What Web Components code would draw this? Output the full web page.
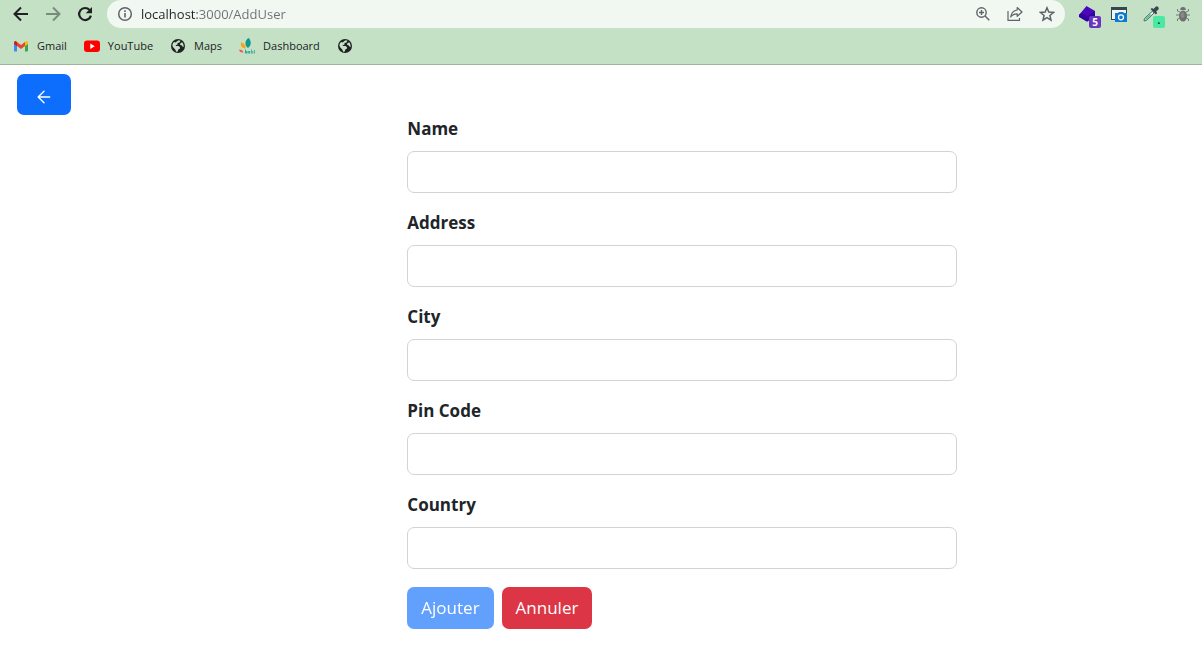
<!DOCTYPE html>
<html lang="fr">
<head>
<meta charset="utf-8">
<meta name="viewport" content="width=device-width, initial-scale=1">
<title>AddUser</title>
<style>
body { margin: 0; background: #fff; color: #212529; font-family: "Open Sans", "Noto Sans", sans-serif; }
</style>
</head>
<body>
<browser-chrome>
  <nav-button slot="nav" icon="back" label="Back"></nav-button>
  <nav-button slot="nav" icon="forward" label="Forward"></nav-button>
  <nav-button slot="nav" icon="reload" label="Reload"></nav-button>
  <address-bar slot="address" url="localhost:3000/AddUser">
    <nav-button icon="zoom" label="Zoom"></nav-button>
    <nav-button icon="share" label="Share"></nav-button>
    <nav-button icon="star" label="Bookmark"></nav-button>
  </address-bar>
  <nav-button slot="extensions" icon="layers" label="Layers" badge="5" tone="violet"></nav-button>
  <nav-button slot="extensions" icon="capture" label="Capture"></nav-button>
  <nav-button slot="extensions" icon="picker" label="Color picker" badge="." tone="green"></nav-button>
  <nav-button slot="extensions" icon="bug" label="Debugger"></nav-button>
  <bookmark-link slot="bookmarks" icon="gmail" name="Gmail">Gmail</bookmark-link>
  <bookmark-link slot="bookmarks" icon="youtube" name="YouTube">YouTube</bookmark-link>
  <bookmark-link slot="bookmarks" icon="globe" name="Maps">Maps</bookmark-link>
  <bookmark-link slot="bookmarks" icon="bakeli" name="Dashboard">Dashboard</bookmark-link>
  <bookmark-link slot="bookmarks" icon="globe" name="Site"></bookmark-link>
</browser-chrome>
<user-page>
  <action-button slot="back" variant="primary" label="Retour"><app-icon name="arrow"></app-icon></action-button>
  <form-field name="name" label="Name"></form-field>
  <form-field name="address" label="Address"></form-field>
  <form-field name="city" label="City"></form-field>
  <form-field name="pincode" label="Pin Code"></form-field>
  <form-field name="country" label="Country"></form-field>
  <action-button slot="actions" variant="primary" disabled>Ajouter</action-button>
  <action-button slot="actions" variant="danger">Annuler</action-button>
</user-page>

<script>
const stroke = 'fill="none" stroke="currentColor"';
const ICONS = {
  back: `<g ${stroke} stroke-width="2"><path d="M15 8H2M8 1.5 1.5 8 8 14.500"/></g>`,
  forward: `<g ${stroke} stroke-width="2" opacity=".45"><path d="M1 8h13M8 1.500 14.500 8 8 14.500"/></g>`,
  reload: `<g ${stroke} stroke-width="2.200"><path d="M12.600 4A6 6 0 1 0 13.900 9.600"/></g><path fill="currentColor" d="M15 1v6.300H8.700z"/>`,
  info: `<circle cx="8" cy="8" r="6.300" ${stroke} stroke-width="1.500"/><path fill="currentColor" d="M7.200 7h1.600v4.500H7.200zM7.200 4.300h1.600v1.600H7.200z"/>`,
  zoom: `<g ${stroke} stroke-width="1.400"><circle cx="6.500" cy="6.500" r="4.700"/><path d="m10 10 4.300 4.300M4 6.500h5M6.500 4v5"/></g>`,
  share: `<g ${stroke} stroke-width="1.200" stroke-linejoin="round"><path d="M1 5v9.400h11.500V12"/><path d="M10.200 1.500 15 6l-4.800 4.300V7.900C7.500 7.900 5.300 8.800 3.700 11c.6-3.700 2.800-6.400 6.500-7z"/></g>`,
  star: `<path ${stroke} stroke-width="1.500" d="m8 1.800 1.800 4.300 4.700.4-3.600 3 1.100 4.600L8 11.700l-4 2.400 1.100-4.600-3.600-3 4.700-.4z"/>`,
  layers: `<path fill="#30009c" d="M0 9v2l8 4.800 8-4.800V5z"/><path fill="#4a08b8" d="m7.500 0 8.500 5-8 6-8-2z"/><path fill="#3b009f" d="M0 8.500 2.500 7l6 3L16 5v3l-7.500 5z"/>`,
  capture: `<path fill="#34474f" d="M0 1h16v13H0z"/><path fill="#f6f8f8" d="M1 4h14v9H1z"/><path fill="#0c7bd0" d="M4 7h3l1-1h4l1 1h3v9H4z"/><circle cx="10" cy="11.300" r="2.500" fill="#0c7bd0" stroke="#fff" stroke-width="1.300"/>`,
  picker: `<path d="m9.500 5-8 7.500L1 15l2.500-.6L11 7z" fill="#d7f5e5" stroke="#5b6b66"/><path d="m7.500 8.500-5 5" stroke="#35c48b" stroke-width="1.500"/><path fill="#37474f" d="m7.500 3 1.500-1 1.500 1L12.700.7a2 2 0 0 1 2.700 2.800L13.200 5.500l1 1.500-1.400 1.500z"/>`,
  bug: `<g ${stroke} stroke-width=".9"><path d="M5 6 2.500 5V3M11 6l2.500-1V3M4 9H1M12 9h3M5 12l-2.500 1v2M11 12l2.500 1v2"/></g><path fill="currentColor" d="M5.200 4a2.800 3 0 0 1 5.600 0z"/><ellipse cx="8" cy="10" rx="4" ry="5.500" fill="currentColor"/><ellipse cx="7.500" cy="9" rx="2" ry="3" fill="#858987"/>`,
  gmail: `<path fill="#4285f4" d="M1 5v7.500q0 1 1 1h2V7z"/><path fill="#34a853" d="M15 5v7.500q0 1-1 1h-2V7z"/><path fill="#ea4335" d="M4 4v4l4 3 4-3V4L8 7z"/><path fill="#c5221f" d="M1 4.500V6l3 2.200V4C2.500 2 1 3 1 4.500z"/><path fill="#fbbc04" d="M15 4.500V6l-3 2.200V4c1.500-2 3-1 3 .5z"/>`,
  youtube: `<rect y="2.500" width="16" height="11.500" rx="3" fill="#f00"/><path fill="#fff" d="m6.300 5.500 4.500 2.700-4.500 2.700z"/>`,
  globe: `<circle cx="8" cy="8" r="7" fill="#202124"/><path fill="#c5e1c5" d="M8.500 2.300 10.500 2.800 9.500 4.500l-2 .6v1.400l-1.700.7v.8h2.800L10 9.300l-.2 1.500-1.600.8-.4 1.900-1.700.2-.8-2.200-2-2L2.300 7.500A5.800 5.800 0 0 1 4 4l1.500.4zM12.200 4.200A6 6 0 0 1 13.800 9l-1.300-.4-1-1.400-1.500-.5.4-1.400z"/>`,
  bakeli: `<path fill="#13998c" d="M9 10C4.500 7 6.500 1 10 0c2 3 3 7-1 10z"/><path fill="#f9a51a" d="M6.500 10.500C2 10 1 7 2.200 4.300 5 5.200 7 7.500 6.500 10.500z"/><path fill="#ef5a3c" d="M4.500 14.500C1.500 15 .3 13.500.2 11.500c2 0 3.800 1 4.300 3z"/><path fill="#13998c" d="M6 11.500h1V13h1.500v2.500H6zM9.200 13h2v2.500h-2zM12 11.500h.8v4H12zM13.300 13h1v2.500h-1zM15 12h.8v3.500H15z" opacity=".8"/>`,
  arrow: `<path ${stroke} stroke-width="1.600" stroke-linecap="round" stroke-linejoin="round" d="M14.500 8h-13M8 1.500 1.300 8 8 14.500"/>`
};

class ShadowElement extends HTMLElement {
  connectedCallback() {
    if (this.shadowRoot) return;
    const template = document.createElement('template');
    template.innerHTML = this.render();
    this.attachShadow({ mode: 'open' }).append(template.content.cloneNode(true));
  }
  attr(name) { return this.getAttribute(name) || ''; }
}

customElements.define('app-icon', class extends ShadowElement {
  render() {
    return `<style>:host{display:block;width:16px;height:16px;flex:none}svg{display:block;width:100%;height:100%}</style>
      <svg viewBox="0 0 16 16" aria-hidden="true">${ICONS[this.attr('name')]}</svg>`;
  }
});

customElements.define('nav-button', class extends ShadowElement {
  render() {
    const badge = this.attr('badge');
    return `<style>
      :host{display:block;flex:none;color:#202124}
      :host([icon=zoom]),:host([icon=share]),:host([icon=star]){color:#5f6368}
      :host([icon=bug]){color:#6c706e}
      button{display:block;position:relative;padding:0;border:0;background:none;color:inherit;font:inherit}
      span{position:absolute;left:10px;top:10px;width:12px;height:12px;border-radius:2px;font:700 10px/12px "Open Sans",sans-serif;text-align:center;background:#6a35bd;color:#fff}
      span.green{background:#4be8a4;color:#202124;line-height:8px}
      </style><button type="button" aria-label="${this.attr('label')}"><app-icon name="${this.attr('icon')}"></app-icon>${badge ? `<span class="${this.attr('tone')}">${badge}</span>` : ''}</button>`;
  }
});

customElements.define('address-bar', class extends ShadowElement {
  render() {
    return `<style>
      :host{display:flex;align-items:center;gap:8px;height:28px;padding:0 10px;border-radius:14px;background:#f1f8f1;color:#5f6368;box-sizing:border-box}
      input{flex:1;min-width:0;height:24px;padding:0;border:0;outline:0;font:13px/24px "Open Sans","Noto Sans",sans-serif;color:transparent;background:linear-gradient(90deg,#202124 56px,#6b7073 56px);background-clip:text;-webkit-background-clip:text}
      div{display:flex;gap:16px}
      </style><app-icon name="info"></app-icon><input type="text" aria-label="Address bar" value="${this.attr('url')}"><div><slot></slot></div>`;
  }
});

customElements.define('bookmark-link', class extends ShadowElement {
  render() {
    return `<style>
      :host{display:block}
      a{display:flex;align-items:center;gap:8px;color:#202124;text-decoration:none;font-size:11px;line-height:20px}
      </style><a href="#" aria-label="${this.attr('name')}"><app-icon name="${this.attr('icon')}"></app-icon><slot></slot></a>`;
  }
});

customElements.define('browser-chrome', class extends ShadowElement {
  render() {
    return `<style>
      :host{display:block;background:#c5e1c5;border-bottom:1px solid #9fb59f}
      .bar{display:flex;align-items:center;height:28px;padding:0 11px 0 13px}
      .nav{display:flex;gap:16px;margin-right:14px}
      .address{flex:1;min-width:0}
      .extensions{display:flex;gap:16px;margin-left:14px}
      nav{display:flex;gap:17px;align-items:center;height:36px;padding:0 13px}
      </style>
      <div class="bar"><div class="nav"><slot name="nav"></slot></div><div class="address"><slot name="address"></slot></div><div class="extensions"><slot name="extensions"></slot></div></div>
      <nav aria-label="Bookmarks"><slot name="bookmarks"></slot></nav>`;
  }
});

customElements.define('form-field', class extends ShadowElement {
  render() {
    const id = this.attr('name');
    return `<style>
      :host{display:block}
      label{display:block;margin-bottom:8px;font-size:17px;font-weight:700;line-height:28px}
      input{display:block;box-sizing:border-box;width:100%;height:42px;padding:6px 13px;border:1px solid #ced4da;border-radius:7px;background:#fff;color:#212529;font:18px/28px "Open Sans","Noto Sans",sans-serif}
      </style><label for="${id}">${this.attr('label')}</label><input id="${id}" name="${id}" type="text">`;
  }
});

customElements.define('action-button', class extends ShadowElement {
  render() {
    const label = this.attr('label');
    return `<style>
      :host{display:block}
      button{display:flex;align-items:center;justify-content:center;height:42px;padding:0 14px;border:0;border-radius:7px;background:#0d6efd;color:#fff;font:17px/28px "Open Sans","Noto Sans",sans-serif}
      :host([slot=back]) button{height:41px}
      :host([variant=danger]) button{background:#dc3545}
      button:disabled{opacity:.65}
      ::slotted(app-icon){width:14px;height:14px;margin:4px 6px 0}
      </style><button type="button"${label ? ` aria-label="${label}"` : ''}${this.hasAttribute('disabled') ? ' disabled' : ''}><slot></slot></button>`;
  }
});

customElements.define('user-page', class extends ShadowElement {
  render() {
    return `<style>
      :host{display:block;padding-top:9px}
      .back{display:flex;padding-left:17px}
      main{display:grid;grid-template-columns:repeat(12,minmax(0,1fr));column-gap:28px;padding:0 52px 22px 22px}
      form{grid-column:5 / span 6;display:grid;gap:16px}
      .actions{display:flex;gap:8px;padding-top:2px}
      </style>
      <div class="back"><slot name="back"></slot></div>
      <main><form><slot></slot><div class="actions"><slot name="actions"></slot></div></form></main>`;
  }
});
</script>
</body>
</html>
